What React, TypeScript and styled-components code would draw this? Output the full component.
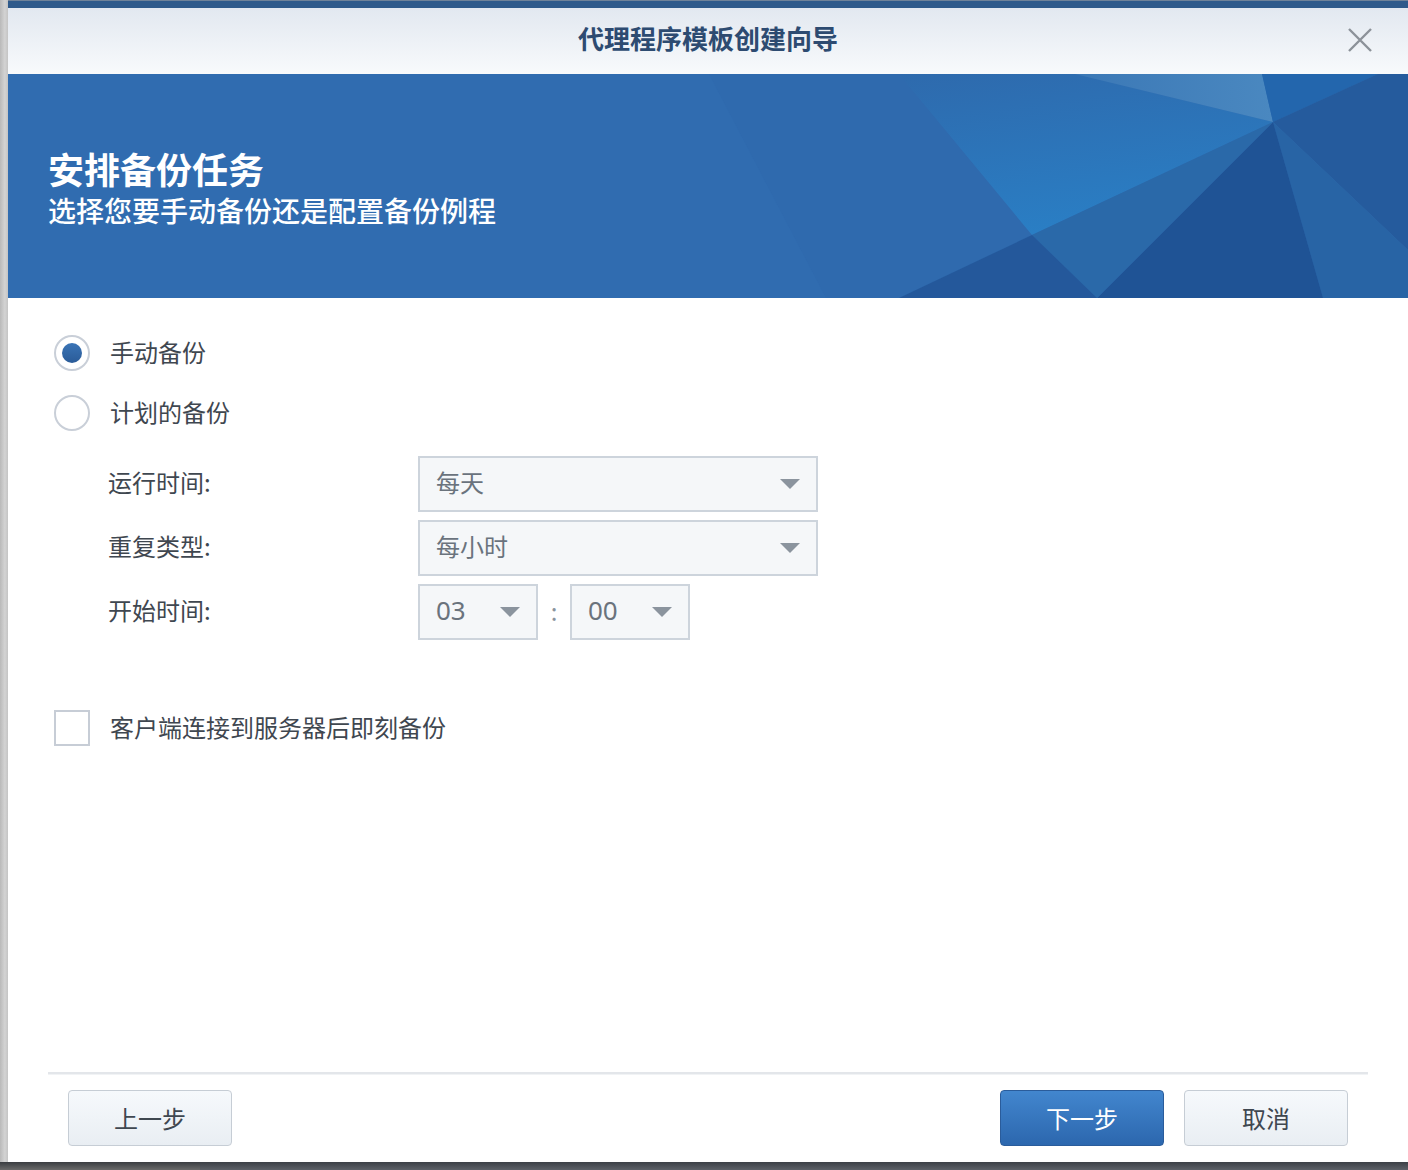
import React from "react";
import styled, { createGlobalStyle } from "styled-components";

const GlobalStyle = createGlobalStyle`
  html, body { margin: 0; padding: 0; }
  body {
    background: #55595f;
    font-family: "Noto Sans CJK SC", "Noto Sans", sans-serif;
    overflow: hidden;
  }
`;

const Page = styled.div`
  width: 1408px;
  height: 1170px;
  display: flex;
  flex-direction: column;
`;

const MainRow = styled.div`
  height: 1162px;
  display: flex;
`;

const LeftEdge = styled.div`
  width: 8px;
  background: linear-gradient(to right, #b9b9b9, #d3d3d3 60%, #c4c4c4);
`;

const BottomShade = styled.div`
  height: 8px;
  background: linear-gradient(to bottom, #3c4046, #5d6168);
  display: flex;
`;

const ShadeLeft = styled.div`
  width: 200px;
  background: linear-gradient(to bottom, #3a3d41, #6a6a6a);
`;

const Window = styled.div`
  flex: 1;
  display: flex;
  flex-direction: column;
  background: #ffffff;
`;

const TopStrip = styled.div`
  height: 8px;
  background: #2f5a8b;
  border-top: 1px solid #6f8299;
  box-sizing: border-box;
`;

const TitleBar = styled.div`
  height: 66px;
  display: flex;
  align-items: center;
  justify-content: center;
  position: relative;
  background: linear-gradient(to bottom, #e2e8f0, #f8fafc);
`;

const TitleText = styled.div`
  font-size: 26px;
  line-height: 32px;
  font-weight: 700;
  color: #2d4b71;
  margin-top: -6px;
`;

const CloseButton = styled.div`
  position: absolute;
  right: 34px;
  top: 18px;
  width: 28px;
  height: 28px;
  display: flex;
  align-items: center;
  justify-content: center;
`;

const Banner = styled.div`
  height: 224px;
  position: relative;
  background: #306cb0;
  overflow: hidden;
  box-sizing: border-box;
  padding: 74px 0 0 40px;
`;

const BannerArt = styled.svg`
  position: absolute;
  left: 0;
  top: 0;
  width: 1400px;
  height: 224px;
`;

const BannerText = styled.div`
  position: relative;
  display: flex;
  flex-direction: column;
  color: #ffffff;
`;

const BannerTitle = styled.div`
  font-size: 36px;
  line-height: 40px;
  font-weight: 700;
`;

const BannerSub = styled.div`
  font-size: 28px;
  line-height: 34px;
  font-weight: 500;
  margin-top: 5px;
`;

const Content = styled.div`
  flex: 1;
  display: flex;
  flex-direction: column;
  padding: 25px 0 0 46px;
`;

const OptionRow = styled.div`
  height: 60px;
  display: flex;
  align-items: center;
  gap: 20px;
`;

const Radio = styled.div<{ $checked?: boolean }>`
  width: 36px;
  height: 36px;
  box-sizing: border-box;
  border-radius: 50%;
  border: 2px solid #c9cfd8;
  background: #ffffff;
  display: flex;
  align-items: center;
  justify-content: center;
  &::after {
    content: "";
    display: ${(p) => (p.$checked ? "block" : "none")};
    width: 20px;
    height: 20px;
    border-radius: 50%;
    background: linear-gradient(to bottom, #3a74b6, #2a5b98);
  }
`;

const Checkbox = styled.div`
  width: 36px;
  height: 36px;
  box-sizing: border-box;
  border: 2px solid #c7cdd6;
  background: #ffffff;
`;

const OptionLabel = styled.span`
  font-size: 24px;
  line-height: 30px;
  color: #3f4750;
  margin-top: -3px;
`;

const Form = styled.div`
  display: flex;
  flex-direction: column;
  gap: 8px;
  margin-top: 13px;
  padding-left: 54px;
`;

const FormRow = styled.div`
  display: flex;
  align-items: center;
  height: 56px;
`;

const FormLabel = styled.div`
  width: 310px;
  font-size: 24px;
  line-height: 30px;
  color: #3f4750;
  margin-top: -4px;
`;

const Select = styled.div<{ $width: number }>`
  width: ${(p) => p.$width}px;
  height: 56px;
  box-sizing: border-box;
  border: 2px solid #cdd4dc;
  background: #f5f7f9;
  display: flex;
  align-items: center;
  justify-content: space-between;
  padding: 0 16px 0 16px;
  color: #6a737d;
`;

const SelectValue = styled.span<{ $digits?: boolean }>`
  font-family: ${(p) => (p.$digits ? '"Noto Sans", sans-serif' : '"Noto Sans CJK SC", sans-serif')};
  font-size: ${(p) => (p.$digits ? 26 : 24)}px;
  line-height: 30px;
  margin-top: -5px;
`;

const Arrow = styled.span`
  width: 0;
  height: 0;
  border-left: 10px solid transparent;
  border-right: 10px solid transparent;
  border-top: 10px solid #8b949e;
`;

const TimeColon = styled.span`
  width: 32px;
  text-align: center;
  font-size: 24px;
  color: #8b949e;
  margin-top: -4px;
`;

const CheckRow = styled(OptionRow)`
  margin-top: 58px;
`;

const Footer = styled.div`
  margin: 0 40px;
  border-top: 2px solid #e3e6ea;
  box-shadow: inset 0 1px 0 #f1f3f5;
  height: 90px;
  box-sizing: border-box;
  display: flex;
  align-items: flex-start;
  padding: 16px 20px 0 20px;
`;

const Spacer = styled.div`
  flex: 1;
`;

const Button = styled.div<{ $primary?: boolean }>`
  width: 164px;
  height: 56px;
  box-sizing: border-box;
  border-radius: 4px;
  display: flex;
  align-items: center;
  justify-content: center;
  font-size: 24px;
  line-height: 30px;
  padding-bottom: 1px;
  border: 1px solid ${(p) => (p.$primary ? "#2a5c9b" : "#c6cdd5")};
  background: ${(p) =>
    p.$primary
      ? "linear-gradient(to bottom, #4286ce, #2c67ae)"
      : "linear-gradient(to bottom, #f6f9fc, #e9eef3)"};
  color: ${(p) => (p.$primary ? "#ffffff" : "#3f4750")};
  & + & {
    margin-left: 20px;
  }
`;

export default function App() {
  return (
    <>
      <GlobalStyle />
      <Page>
        <MainRow>
          <LeftEdge />
          <Window>
            <TopStrip />
            <TitleBar>
              <TitleText>代理程序模板创建向导</TitleText>
              <CloseButton>
                <svg width="26" height="26" viewBox="0 0 26 26">
                  <path d="M2 2 L24 24 M24 2 L2 24" stroke="#8c9299" strokeWidth="2.4" fill="none" />
                </svg>
              </CloseButton>
            </TitleBar>
            <Banner>
              <BannerArt viewBox="0 0 1400 224" preserveAspectRatio="none">
                <defs>
                  <linearGradient id="glow" x1="0" y1="0" x2="0.3" y2="1">
                    <stop offset="0" stopColor="#2e6aad" />
                    <stop offset="1" stopColor="#2a7ec4" />
                  </linearGradient>
                  <linearGradient id="lt" x1="0" y1="0" x2="1" y2="0">
                    <stop offset="0" stopColor="#3b78b6" />
                    <stop offset="1" stopColor="#4a88c0" />
                  </linearGradient>
                </defs>
                <polygon points="701,0 891,0 1024,161 891,224 818,224" fill="#2f6aae" />
                <polygon points="891,0 1067,0 1265,48 1024,161" fill="url(#glow)" />
                <polygon points="1067,0 1254,0 1265,48" fill="url(#lt)" />
                <polygon points="1254,0 1370,0 1265,48" fill="#2366ad" />
                <polygon points="1370,0 1400,0 1400,176 1265,48" fill="#255b9d" />
                <polygon points="1265,48 1400,176 1400,224 1315,224" fill="#2864a5" />
                <polygon points="1265,48 1315,224 1089,224" fill="#1f5395" />
                <polygon points="1265,48 1089,224 1024,161" fill="#2a69a9" />
                <polygon points="1024,161 1089,224 891,224" fill="#24589b" />
              </BannerArt>
              <BannerText>
                <BannerTitle>安排备份任务</BannerTitle>
                <BannerSub>选择您要手动备份还是配置备份例程</BannerSub>
              </BannerText>
            </Banner>
            <Content>
              <OptionRow>
                <Radio $checked />
                <OptionLabel>手动备份</OptionLabel>
              </OptionRow>
              <OptionRow>
                <Radio />
                <OptionLabel>计划的备份</OptionLabel>
              </OptionRow>
              <Form>
                <FormRow>
                  <FormLabel>运行时间:</FormLabel>
                  <Select $width={400}>
                    <SelectValue>每天</SelectValue>
                    <Arrow />
                  </Select>
                </FormRow>
                <FormRow>
                  <FormLabel>重复类型:</FormLabel>
                  <Select $width={400}>
                    <SelectValue>每小时</SelectValue>
                    <Arrow />
                  </Select>
                </FormRow>
                <FormRow>
                  <FormLabel>开始时间:</FormLabel>
                  <Select $width={120}>
                    <SelectValue $digits>03</SelectValue>
                    <Arrow />
                  </Select>
                  <TimeColon>:</TimeColon>
                  <Select $width={120}>
                    <SelectValue $digits>00</SelectValue>
                    <Arrow />
                  </Select>
                </FormRow>
              </Form>
              <CheckRow>
                <Checkbox />
                <OptionLabel>客户端连接到服务器后即刻备份</OptionLabel>
              </CheckRow>
            </Content>
            <Footer>
              <Button>上一步</Button>
              <Spacer />
              <Button $primary>下一步</Button>
              <Button>取消</Button>
            </Footer>
          </Window>
        </MainRow>
        <BottomShade>
          <ShadeLeft />
        </BottomShade>
      </Page>
    </>
  );
}
